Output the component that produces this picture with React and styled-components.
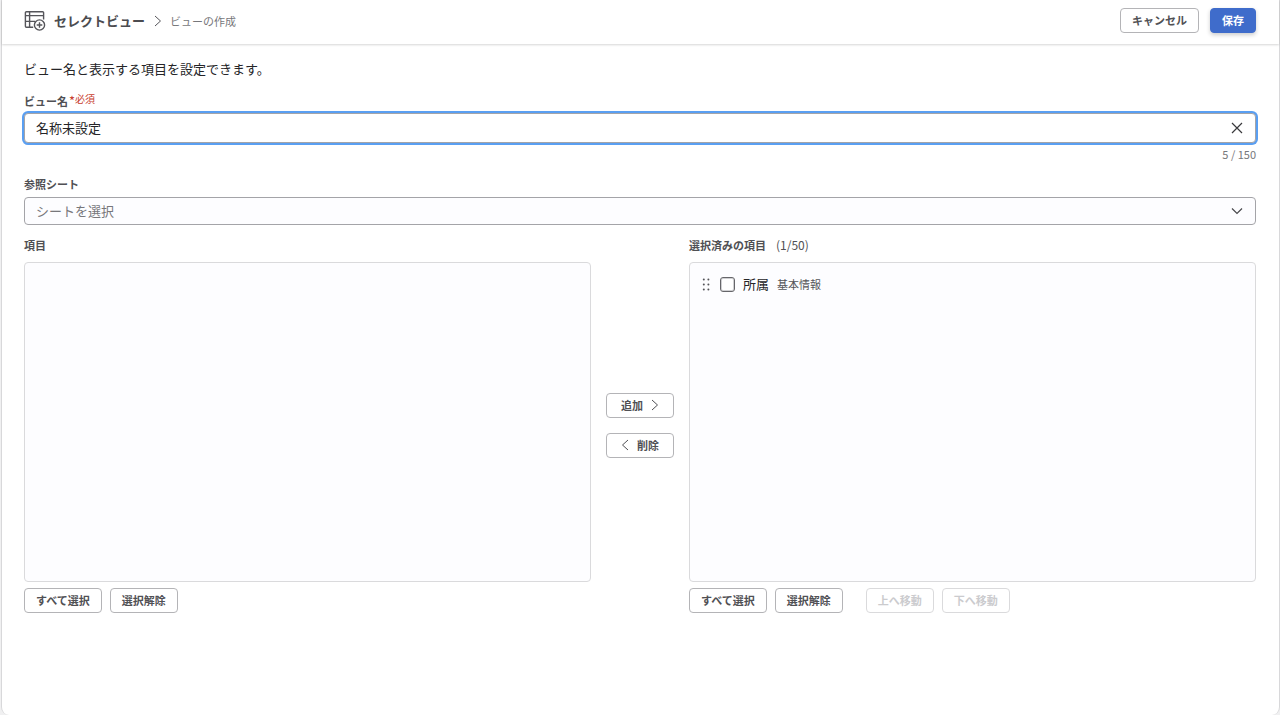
import React, { useState } from 'react'
import styled, { createGlobalStyle } from 'styled-components'

const MAX_LENGTH = 150
const MAX_ITEMS = 50

const Chevron = ({ points, width, height, weight }) => (
  <svg width={width} height={height} viewBox={`0 0 ${width} ${height}`} fill="none" stroke="currentColor" strokeWidth={weight} aria-hidden="true">
    <polyline points={points} />
  </svg>
)

const ChevronRight = () => <Chevron width={8} height={12} weight={1} points="1,1 6.5,6 1,11" />
const ChevronLeft = () => <Chevron width={8} height={12} weight={1} points="7,1 1.5,6 7,11" />
const ChevronDown = () => <Chevron width={12} height={8} weight={1.2} points="1,1.5 6,6.5 11,1.5" />

const ViewIcon = () => (
  <svg width="22" height="21" viewBox="0 0 22 21" fill="none" stroke="currentColor" strokeWidth="1.4" aria-hidden="true">
    <path d="M19.6 9.5V2.7a1 1 0 0 0-1-1H2.4a1 1 0 0 0-1 1v13.6a1 1 0 0 0 1 1h6.8" />
    <path d="M1.4 5.6h18.2M1.4 11.4h9.8M5.6 1.7v15.6" />
    <circle cx="15.5" cy="15" r="5.1" />
    <path d="M15.5 12.2v5.6M12.7 15h5.6" />
  </svg>
)

const DragIcon = () => (
  <svg width="8" height="14" viewBox="0 0 8 14" fill="#555559" aria-hidden="true">
    {[2.5, 7.5, 12.5].map(y => (
      <React.Fragment key={`dot${y}`}>
        <circle cx="1.8" cy={y} r="1" />
        <circle cx="6.4" cy={y} r="1" />
      </React.Fragment>
    ))}
  </svg>
)

function App () {

  const [name, setName] = useState('名称未設定')
  const [focused, setFocused] = useState(true)
  const [items, setItems] = useState([
    {
      title: '所属',
      group: '基本情報',
      checked: false,
    }
  ]);

  const checkAll = (checked) => setItems(items.map(item => ({ ...item, checked })))

  const toggle = (index) => {
    setItems(items.map((item, i) => i === index ? { ...item, checked: !item.checked } : item))
  }

  return (
    <>
      <GlobalStyle />
      <Page>
        <Header>
          <ViewIcon />
          <Title>セレクトビュー</Title>
          <ChevronRight />
          <Crumb>ビューの作成</Crumb>
          <Actions>
            <Button>キャンセル</Button>
            <Button className='primary'>保存</Button>
          </Actions>
        </Header>
        <Main>
          <Description>ビュー名と表示する項目を設定できます。</Description>

          <Label htmlFor="viewName">ビュー名<Required>*<small>必須</small></Required></Label>
          <Field className={focused ? 'focused' : ''}>
            <NameInput
              id="viewName"
              value={name}
              maxLength={MAX_LENGTH}
              onChange={e => setName(e.target.value)}
              onFocus={() => setFocused(true)}
              onBlur={() => setFocused(false)}/>
            <ClearButton aria-label="クリア" onClick={() => setName('')}>
              <svg width="12" height="12" viewBox="0 0 12 12" stroke="currentColor" strokeWidth="1.2">
                <path d="M1 1l10 10M11 1L1 11" />
              </svg>
            </ClearButton>
          </Field>
          <Counter>{name.length} / {MAX_LENGTH}</Counter>

          <Label htmlFor="sheet">参照シート</Label>
          <SelectWrapper>
            <Select id="sheet" defaultValue="">
              <option value="">シートを選択</option>
            </Select>
            <ChevronDown />
          </SelectWrapper>

          <Transfer>
            <Column>
              <ListTitle>項目</ListTitle>
              <List />
              <ListActions>
                <Button>すべて選択</Button>
                <Button>選択解除</Button>
              </ListActions>
            </Column>
            <MoveButtons>
              <Button>追加<ChevronRight /></Button>
              <Button><ChevronLeft />削除</Button>
            </MoveButtons>
            <Column>
              <ListTitle>選択済みの項目<Count>({items.length}/{MAX_ITEMS})</Count></ListTitle>
              <List>
                {items.map((item, index) => (
                  <Item key={`item${index}`}>
                    <DragIcon />
                    <ItemLabel>
                      <Checkbox checked={item.checked} onChange={() => toggle(index)} />
                      {item.title}
                      <Group>{item.group}</Group>
                    </ItemLabel>
                  </Item>
                ))}
              </List>
              <ListActions>
                <Button onClick={() => checkAll(true)}>すべて選択</Button>
                <Button onClick={() => checkAll(false)}>選択解除</Button>
                <OrderButtons>
                  <Button disabled>上へ移動</Button>
                  <Button disabled>下へ移動</Button>
                </OrderButtons>
              </ListActions>
            </Column>
          </Transfer>
        </Main>
      </Page>
    </>
  )
}


export default App

const GlobalStyle = createGlobalStyle`
  * {
    box-sizing: border-box;
  }
  body {
    margin: 0;
    background: #f0f0f1;
    color: #252528;
    font-family: "Noto Sans CJK JP", sans-serif;
    font-size: 13px;
    line-height: 20px;
  }
  button, input, select {
    font-family: inherit;
  }
`

const Page = styled.div`
  min-height: 100vh;
  margin-left: 1px;
  border: 1px solid #d8d8da;
  border-width: 0 1px;
  border-radius: 0 0 8px 8px;
  background: #fff;
`

const Header = styled.header`
  display: flex;
  align-items: center;
  height: 44px;
  padding: 0 23px 3px 22px;
  color: #55555a;
  box-shadow: 0 1px 2px rgba(0, 0, 0, .16);
`

const Title = styled.h1`
  margin: 0 9px 0 8px;
  font-size: 13px;
  font-weight: 700;
  color: #4c4c50;
`

const Crumb = styled.span`
  margin-left: 8px;
  font-size: 11px;
  color: #77777b;
`

const Actions = styled.div`
  display: flex;
  gap: 11px;
  margin-left: auto;
`

const Button = styled.button.attrs({ type: 'button' })`
  display: flex;
  align-items: center;
  justify-content: center;
  gap: 8px;
  height: 25px;
  padding: 0 11px 1px;
  border: 1px solid #b4b4b7;
  border-radius: 4px;
  background: #fff;
  font-size: 11px;
  font-weight: 700;
  line-height: 16px;
  white-space: nowrap;
  color: #505054;
  &.primary {
    border-color: #3f6ccb;
    background: #3f6ccb;
    color: #fff;
    box-shadow: 0 2px 4px rgba(0, 0, 0, .2);
  }
  &:disabled {
    border-color: #dadadc;
    color: #cbcbce;
  }
`

const Main = styled.main`
  padding: 15px 23px 24px 22px;
`

const Description = styled.p`
  margin: 0 0 14px;
`

const Label = styled.label`
  display: block;
  height: 20px;
  font-size: 11px;
  line-height: 16px;
  font-weight: 700;
  color: #505054;
`

const Required = styled.span`
  margin-left: 1px;
  font-size: 13px;
  font-weight: 400;
  line-height: 1;
  color: #c8402f;
  small {
    font-size: 10px;
    vertical-align: 3px;
    line-height: 1;
  }
`

const Field = styled.div`
  display: flex;
  align-items: center;
  height: 30px;
  border: 1px solid #a4a4a8;
  border-radius: 4px;
  background: #fff;
  &.focused {
    box-shadow: 0 0 0 2px #5a9ff2;
  }
`

const NameInput = styled.input`
  flex: 1;
  min-width: 0;
  padding: 0 11px 2px;
  border: none;
  outline: none;
  background: none;
  font-size: 13px;
  color: #252528;
`

const ClearButton = styled.button.attrs({ type: 'button' })`
  display: flex;
  padding: 6px 12px;
  border: none;
  background: none;
  color: #39393c;
`

const Counter = styled.div`
  margin: 3px 0 14px;
  font-size: 11px;
  line-height: 16px;
  text-align: right;
  color: #77777b;
`

const SelectWrapper = styled.div`
  position: relative;
  margin-top: 1px;
  color: #48484c;
  svg {
    position: absolute;
    right: 13px;
    top: 10px;
    pointer-events: none;
  }
`

const Select = styled.select`
  display: block;
  appearance: none;
  width: 100%;
  height: 28px;
  padding: 0 32px 2px 11px;
  border: 1px solid #a4a4a8;
  border-radius: 4px;
  background: #fdfdff;
  font-size: 13px;
  color: #77777b;
`

const Transfer = styled.div`
  display: grid;
  grid-template-columns: 1fr 68px 1fr;
  gap: 15px;
  margin-top: 12px;
`

const Column = styled.section`
  min-width: 0;
`

const ListTitle = styled.h2`
  margin: 0 0 9px;
  font-size: 11px;
  line-height: 16px;
  font-weight: 700;
  color: #505054;
`

const Count = styled.span`
  margin-left: 10px;
  font-size: 12px;
  line-height: 1;
  font-weight: 400;
`

const List = styled.ul`
  height: 320px;
  margin: 0 0 6px;
  padding: 11px 12px;
  border: 1px solid #dadadc;
  border-radius: 4px;
  background: #fdfdff;
  list-style: none;
`

const ListActions = styled.div`
  display: flex;
  gap: 8px;
`

const OrderButtons = styled.div`
  display: flex;
  gap: 8px;
  margin-left: 15px;
`

const MoveButtons = styled.div`
  display: flex;
  flex-direction: column;
  justify-content: center;
  gap: 15px;
`

const Item = styled.li`
  display: flex;
  align-items: center;
  gap: 10px;
`

const ItemLabel = styled.label`
  display: flex;
  align-items: center;
  gap: 8px;
`

const Checkbox = styled.input.attrs({ type: 'checkbox' })`
  appearance: none;
  width: 15px;
  height: 15px;
  margin: 0;
  border: 1px solid #66666a;
  border-radius: 3px;
  background: #fff;
  box-shadow: inset 0 0 0 1px #d0d0d3;
  &:checked {
    border-color: #3f6ccb;
    background: #3f6ccb;
  }
`

const Group = styled.span`
  font-size: 11px;
  color: #55555a;
`
